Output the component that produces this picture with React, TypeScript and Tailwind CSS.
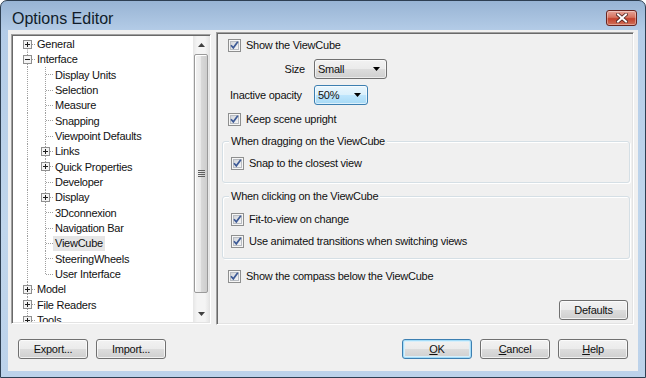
import React from "react";

type Row = { label: string; lvl: 0 | 1; exp?: "+" | "-"; sel?: boolean; last?: boolean };

const rows: Row[] = [
  { label: "General", lvl: 0, exp: "+" },
  { label: "Interface", lvl: 0, exp: "-" },
  { label: "Display Units", lvl: 1 },
  { label: "Selection", lvl: 1 },
  { label: "Measure", lvl: 1 },
  { label: "Snapping", lvl: 1 },
  { label: "Viewpoint Defaults", lvl: 1 },
  { label: "Links", lvl: 1, exp: "+" },
  { label: "Quick Properties", lvl: 1, exp: "+" },
  { label: "Developer", lvl: 1 },
  { label: "Display", lvl: 1, exp: "+" },
  { label: "3Dconnexion", lvl: 1 },
  { label: "Navigation Bar", lvl: 1 },
  { label: "ViewCube", lvl: 1, sel: true },
  { label: "SteeringWheels", lvl: 1 },
  { label: "User Interface", lvl: 1, last: true },
  { label: "Model", lvl: 0, exp: "+" },
  { label: "File Readers", lvl: 0, exp: "+" },
  { label: "Tools", lvl: 0, exp: "+" },
];

const sunken =
  "border border-t-[#a0a0a0] border-l-[#a0a0a0] border-r-white border-b-white shadow-[inset_1px_1px_0_#696969,inset_-1px_-1px_0_#e3e3e3]";

function Expander({ x, open }: { x: number; open: boolean }) {
  return (
    <g>
      <rect x={x + 0.5} y={3.5} width={8} height={8} fill="#f3f3f3" stroke="#8f8f8f" />
      <line x1={x + 2} x2={x + 7} y1={7.5} y2={7.5} stroke="#1e1e1e" />
      {!open && <line x1={x + 4.5} x2={x + 4.5} y1={5} y2={10} stroke="#1e1e1e" />}
    </g>
  );
}

function TreeRow({ r, i }: { r: Row; i: number }) {
  const cy = 7.5;
  const dot = { stroke: "#a0a0a0", strokeDasharray: "1 1" };
  return (
    <div className="h-[15.33px] flex items-center whitespace-nowrap">
      <svg width={r.lvl === 0 ? 22 : 40} height={16} className="shrink-0 overflow-visible">
        <line x1={14.5} x2={14.5} y1={i === 0 ? cy : 0} y2={16} {...dot} />
        {r.lvl === 0 ? (
          <>
            <line x1={19} x2={22} y1={cy} y2={cy} {...dot} />
            {r.exp && <Expander x={10} open={r.exp === "-"} />}
          </>
        ) : (
          <>
            <line x1={32.5} x2={32.5} y1={0} y2={r.last ? cy : 16} {...dot} />
            <line x1={33} x2={40} y1={cy} y2={cy} {...dot} />
            {r.exp && <Expander x={28} open={false} />}
          </>
        )}
      </svg>
      <span className={`px-[2px] leading-[15px] ${r.sel ? "bg-[#e6e6e6]" : ""}`}>{r.label}</span>
    </div>
  );
}

function Tree() {
  return (
    <div className={`${sunken} ml-[3px] mt-[4px] w-[200px] h-[290px] bg-white p-[1px] flex`}>
      <div className="flex-1 overflow-hidden pt-[1px]">
        {rows.map((r, i) => (
          <TreeRow key={r.label} r={r} i={i} />
        ))}
      </div>
      {/* Scrollbar */}
      <div className="w-[16px] h-full flex flex-col bg-[linear-gradient(to_right,#e6e6e6,#f4f4f4_25%,#f4f4f4_75%,#e6e6e6)]">
        <div className="h-[17px] flex items-center justify-center shrink-0">
          <svg width="7" height="4"><path d="M3.5 0L7 4H0z" fill="#404040" /></svg>
        </div>
        <div className="mt-[1px] mx-[1px] h-[239px] rounded-[2px] border border-[#9a9a9a] bg-[linear-gradient(to_right,#f3f3f3,#e8e8e8_50%,#d9d9d9_50%,#cdcdcd)] shadow-[inset_1px_1px_0_#fff] flex items-center justify-center">
          <svg width="7" height="7">
            <path d="M0 0.5h7M0 2.5h7M0 4.5h7M0 6.5h7" stroke="#5f5f5f" />
          </svg>
        </div>
        <div className="flex-1" />
        <div className="h-[17px] flex items-center justify-center shrink-0">
          <svg width="7" height="4"><path d="M0 0h7L3.5 4z" fill="#404040" /></svg>
        </div>
      </div>
    </div>
  );
}

function Check() {
  return (
    <span className="w-[13px] h-[13px] border border-[#8e8f8f] bg-[#f6f6f6] p-[1px] shrink-0 flex">
      <span className="w-full h-full border border-[#b8bcc2] bg-[linear-gradient(135deg,#d2d5da,#f6f6f6)] flex items-center justify-center">
        <svg width="9" height="9" viewBox="0 0 9 9" className="overflow-visible">
          <path d="M1 4.2L3.3 6.8L7.8 0.8" stroke="#3d5a96" strokeWidth="1.7" fill="none" />
        </svg>
      </span>
    </span>
  );
}

function CheckRow({ label, className }: { label: string; className: string }) {
  return (
    <div className={`h-[18px] flex items-center gap-[5px] ${className}`}>
      <Check />
      <span className="whitespace-nowrap">{label}</span>
    </div>
  );
}

function Combo({ text, focused, className }: { text: string; focused?: boolean; className: string }) {
  return (
    <div
      className={`h-[20px] rounded-[3px] border flex items-center justify-between pl-[3px] pr-[6px] ${className} ${
        focused
          ? "border-[#3c7fb1] bg-[linear-gradient(#eaf6fd,#d9f0fc_50%,#bee6fd_50%,#a7d9f5)]"
          : "border-[#707070] bg-[linear-gradient(#f2f2f2,#ebebeb_50%,#dddddd_50%,#cfcfcf)]"
      } shadow-[inset_0_0_0_1px_rgba(255,255,255,0.6)]`}
    >
      <span>{text}</span>
      <svg width="7" height="4"><path d="M0 0h7L3.5 4z" fill="#000" /></svg>
    </div>
  );
}

function Group({ title, className, children }: { title: string; className: string; children: React.ReactNode }) {
  return (
    <div className={`relative ml-[5px] mr-[3px] rounded-[3px] border border-[#d5dfe5] shadow-[inset_1px_1px_0_#fff,1px_1px_0_#fff] flex flex-col ${className}`}>
      <span className="absolute -top-[8px] left-[6px] px-[2px] bg-[#f0f0f0] leading-[14px] whitespace-nowrap">{title}</span>
      {children}
    </div>
  );
}

function Button({ children, def, className }: { children: React.ReactNode; def?: boolean; className: string }) {
  return (
    <div
      className={`h-[20px] rounded-[3px] border flex items-center justify-center bg-[linear-gradient(#f2f2f2,#ebebeb_50%,#dddddd_50%,#cfcfcf)] ${
        def ? "border-[#3c7fb1] shadow-[inset_0_0_0_1px_#a4dcf8,inset_0_0_0_2px_#d8effa]" : "border-[#707070] shadow-[inset_0_0_0_1px_rgba(255,255,255,0.7)]"
      } ${className}`}
    >
      {children}
    </div>
  );
}

function CloseButton() {
  return (
    <div className="mt-[9px] w-[31px] h-[16px] rounded-[3px] border border-[#6a2520] bg-[linear-gradient(#e6a499,#d7735f_45%,#c3412c_55%,#d0705a)] shadow-[inset_0_0_0_1px_rgba(255,255,255,0.35)] flex items-center justify-center">
      <svg width="12" height="10" viewBox="0 0 12 10">
        <path d="M2 1.5L10 8.5M10 1.5L2 8.5" stroke="#4a2220" strokeWidth="3.6" strokeLinecap="square" />
        <path d="M2 1.5L10 8.5M10 1.5L2 8.5" stroke="#ffffff" strokeWidth="2" strokeLinecap="square" />
      </svg>
    </div>
  );
}

export default function App() {
  return (
    <div className="w-[646px] h-[378px] bg-white">
      <div className="w-full h-full flex flex-col rounded-t-[7px] border border-[#2e3f52] bg-[linear-gradient(#98b4d4,#b4cce7_30px,#c0d6ec_60%,#bcd2ea)] font-['Liberation_Sans',Arial,sans-serif] text-[11px] tracking-[-0.25px] text-[#111]">
        {/* Title bar */}
        <div className="h-[29px] shrink-0 flex items-start justify-between pl-[11px] pr-[8px]">
          <span className="mt-[8px] text-[16px] leading-[20px] tracking-normal text-[#101c2a]">Options Editor</span>
          <CloseButton />
        </div>

        {/* Client area */}
        <div className="mx-[7px] h-[341px] shrink-0 bg-[#f0f0f0] flex flex-col">
          <div className="flex items-start">
            <Tree />

            {/* ViewCube page */}
            <div className={`${sunken} ml-[5px] mt-[2px] w-[418px] h-[293px] flex flex-col`}>
              <CheckRow className="mt-[3px] pl-[11px]" label="Show the ViewCube" />
              <div className="mt-[5px] h-[20px] pl-[12px] flex items-center">
                <span className="w-[85px] pr-[9px] text-right">Size</span>
                <Combo className="w-[73px]" text="Small" />
              </div>
              <div className="mt-[6px] h-[20px] pl-[12px] flex items-center">
                <span className="w-[85px] pl-[1px] whitespace-nowrap">Inactive opacity</span>
                <Combo className="w-[54px]" text="50%" focused />
              </div>
              <CheckRow className="mt-[5px] pl-[11px]" label="Keep scene upright" />
              <Group className="mt-[13px] h-[42px]" title="When dragging on the ViewCube">
                <CheckRow className="mt-[12px] pl-[8px]" label="Snap to the closest view" />
              </Group>
              <Group className="mt-[13px] h-[63px]" title="When clicking on the ViewCube">
                <CheckRow className="mt-[13px] pl-[8px]" label="Fit-to-view on change" />
                <CheckRow className="mt-[4px] pl-[8px]" label="Use animated transitions when switching views" />
              </Group>
              <CheckRow className="mt-[8px] pl-[11px]" label="Show the compass below the ViewCube" />
              <div className="mt-[15px] pr-[5px] flex justify-end">
                <Button className="w-[69px]">Defaults</Button>
              </div>
            </div>
          </div>

          {/* Dialog buttons */}
          <div className="mt-[14px] pl-[10px] pr-[10px] flex items-center">
            <Button className="w-[70px]">Export...</Button>
            <Button className="w-[70px] ml-[8px]">Import...</Button>
            <div className="flex-1" />
            <Button className="w-[70px]" def>
              <span><span className="underline">O</span>K</span>
            </Button>
            <Button className="w-[70px] ml-[8px]">
              <span><span className="underline">C</span>ancel</span>
            </Button>
            <Button className="w-[70px] ml-[8px]">
              <span><span className="underline">H</span>elp</span>
            </Button>
          </div>
        </div>
      </div>
    </div>
  );
}
